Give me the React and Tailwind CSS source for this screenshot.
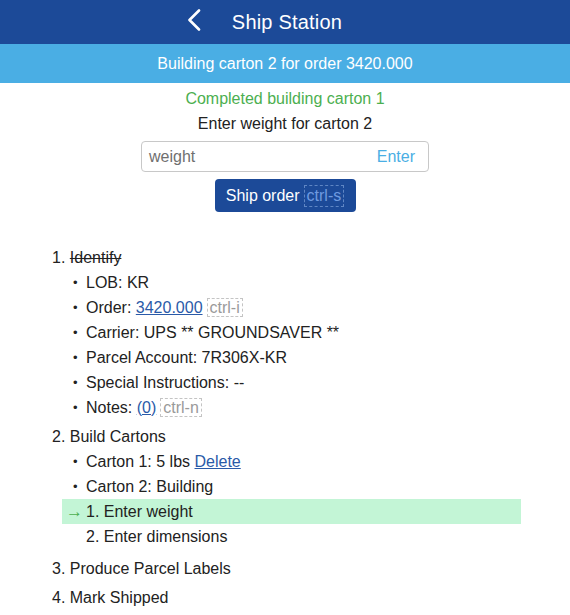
import React from 'react'

function Key({ children, dark }) {
  return (
    <span
      className={
        dark
          ? 'ml-1 border border-dashed border-[#5f86c4] px-[2px] text-[#6f9be0] leading-[20px]'
          : 'ml-1 border border-dashed border-[#c4c4c4] px-[2px] text-[#9a9a9a] leading-[20px]'
      }
    >
      {children}
    </span>
  )
}

function Bullet({ children }) {
  return (
    <li className="flex h-[25px] items-center">
      <span className="w-[13px] text-[13px]">•</span>
      <span>{children}</span>
    </li>
  )
}

function App() {
  return (
    <div className="min-h-[615px] bg-white text-[16px] text-[#222] font-['Liberation_Sans',Arial,sans-serif]">
      <header className="flex h-[44px] items-center justify-center bg-[#1c4a98] text-white">
        <span className="relative ml-[4px] text-[20px] tracking-[0.2px]">
          <svg
            className="absolute left-[-45px] top-[2px]"
            width="15"
            height="22"
            viewBox="0 0 15 22"
            fill="none"
            stroke="white"
            strokeWidth="2.6"
            strokeLinecap="round"
            strokeLinejoin="round"
          >
            <polyline points="12,1.5 2.5,11 12,20.5" />
          </svg>
          Ship Station
        </span>
      </header>

      <div className="flex h-[39px] items-center justify-center bg-[#4aaee4] text-white">
        Building carton 2 for order 3420.000
      </div>

      <div className="flex flex-col items-center pt-[3px]">
        <p className="leading-[25px] text-[#4caf50]">Completed building carton 1</p>
        <p className="leading-[25px]">Enter weight for carton 2</p>
        <div className="mt-[5px] flex h-[31px] w-[288px] items-center justify-between rounded-[4px] border border-[#c8c8c8] pl-[7px] pr-[13px]">
          <span className="text-[#6f6f6f]">weight</span>
          <span className="text-[#4aaee4]">Enter</span>
        </div>
        <button className="mt-[7px] flex h-[33px] w-[141px] items-center justify-center rounded-[4px] bg-[#1c4a98] text-white">
          Ship order
          <Key dark>ctrl-s</Key>
        </button>
      </div>

      <ol className="mt-[33px] pl-[52px]">
        <li className="mb-[4px]">
          <div className="h-[25px] leading-[25px]">
            1. <span className="line-through">Identify</span>
          </div>
          <ul className="pl-[21px]">
            <Bullet>LOB: KR</Bullet>
            <Bullet>
              Order: <a className="text-[#2a5aa8] underline">3420.000</a>
              <Key>ctrl-i</Key>
            </Bullet>
            <Bullet>Carrier: UPS ** GROUNDSAVER **</Bullet>
            <Bullet>Parcel Account: 7R306X-KR</Bullet>
            <Bullet>Special Instructions: --</Bullet>
            <Bullet>
              Notes: <a className="text-[#2a5aa8] underline">(0)</a>
              <Key>ctrl-n</Key>
            </Bullet>
          </ul>
        </li>
        <li className="mb-[4px]">
          <div className="h-[25px] leading-[25px]">2. Build Cartons</div>
          <ul className="pl-[21px]">
            <Bullet>
              Carton 1: 5 lbs <a className="text-[#2a5aa8] underline">Delete</a>
            </Bullet>
            <Bullet>Carton 2: Building</Bullet>
          </ul>
          <ol className="pb-[3px]">
            <li className="ml-[10px] flex h-[25px] w-[459px] items-center bg-[#c3f5d6] pl-[4px]">
              <span className="w-[20px] text-[17px] font-bold text-[#4caf50]">→</span>
              1. Enter weight
            </li>
            <li className="flex h-[25px] items-center pl-[34px]">2. Enter dimensions</li>
          </ol>
        </li>
        <li className="mb-[4px] h-[25px] leading-[25px]">3. Produce Parcel Labels</li>
        <li className="h-[25px] leading-[25px]">4. Mark Shipped</li>
      </ol>
    </div>
  )
}

export default App
